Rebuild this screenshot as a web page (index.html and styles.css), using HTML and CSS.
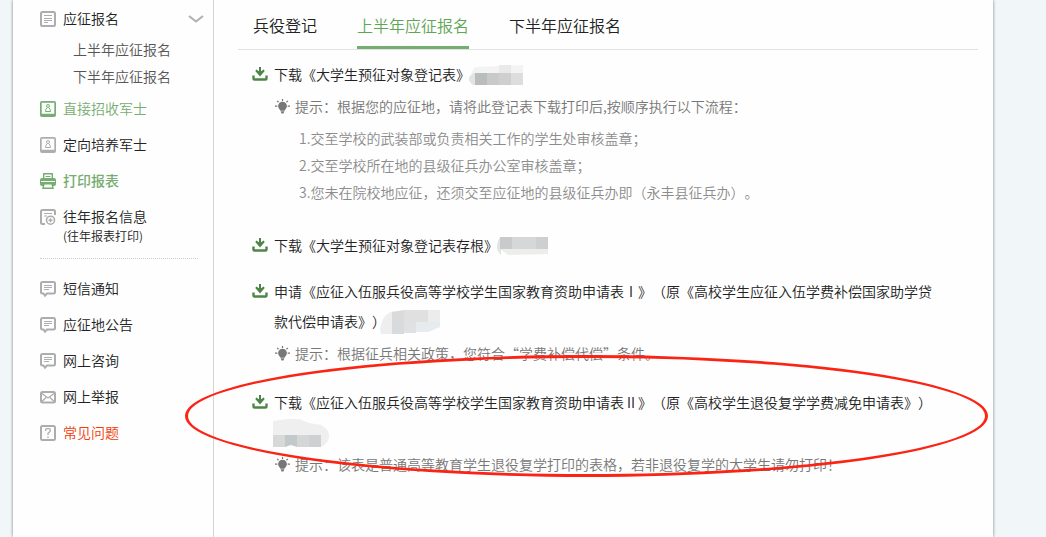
FILE: index.html
```html
<!DOCTYPE html>
<html lang="zh-CN">
<head>
<meta charset="utf-8">
<title>应征报名</title>
<link rel="stylesheet" href="styles.css">
</head>
<body>
<svg class="sprite" aria-hidden="true">
  <symbol id="doc" viewBox="0 0 16 16"><rect x="1" y="1" width="14" height="14" rx="1.5" fill="none" stroke="currentColor" stroke-width="2"/><path d="M4 4.500h8M4 7.500h8M4 9.500h8M4 11.500h4" stroke="currentColor" fill="none"/></symbol>
  <symbol id="badge" viewBox="0 0 16 16"><path d="M2 0h12q2 0 2 2v12q0 2-2 2H2q-2 0-2-2V2Q0 0 2 0zM1.700 1.700v11h12.600v-11z" fill="currentColor" fill-rule="evenodd"/><circle cx="8" cy="5" r="1.500" fill="none" stroke="currentColor"/><path d="M7.300 6.500Q5.500 8 5.500 10.500h5Q10.500 8 8.700 6.500" fill="none" stroke="currentColor"/></symbol>
  <symbol id="printer" viewBox="0 0 16 16"><path d="M3.700 5V.7h8.600V5" fill="none" stroke="currentColor" stroke-width="1.400"/><path d="M5.500 3.500h5" stroke="currentColor"/><path d="M2 5h12q2 0 2 2v4q0 2-2 2H2q-2 0-2-2V7q0-2 2-2z" fill="currentColor"/><path d="M1 8.500h14" stroke="#fefefe"/><path d="M4 10.700h8l1 4.600H3z" fill="#fefefe" stroke="currentColor" stroke-width="1.400"/></symbol>
  <symbol id="history" viewBox="0 0 16 16"><path d="M5 15H2.500Q1 15 1 13.500v-11Q1 1 2.500 1h11Q15 1 15 2.500V6" fill="none" stroke="currentColor" stroke-width="2"/><path d="M4 4.500h8M4 7h3" stroke="currentColor"/><circle cx="10.500" cy="11.200" r="4" fill="none" stroke="currentColor" stroke-width="1.600"/><path d="M10.500 9.200v4M8.500 11.200h4" stroke="currentColor" stroke-width="1.500"/></symbol>
  <symbol id="chat" viewBox="0 0 16 16"><path d="M2.500 1h11Q15 1 15 2.500v8.500q0 1.500-1.500 1.500H7l-2 2.200-1.500-2.200h-1Q1 12.500 1 11V2.500Q1 1 2.500 1z" fill="none" stroke="currentColor" stroke-width="2"/><path d="M4 4.500h8M4 6.500h8M4 8.500h5" stroke="currentColor"/></symbol>
  <symbol id="mail" viewBox="0 0 16 16"><rect x="1" y="3" width="14" height="10.500" rx="1.500" fill="none" stroke="currentColor" stroke-width="2"/><path d="M2 4.500l6 4.500 6-4.500M2 12.500l4-4M14 12.500l-4-4" fill="none" stroke="currentColor" stroke-width="1.300"/></symbol>
  <symbol id="question" viewBox="0 0 16 16"><rect x="1" y="1" width="14" height="14" rx="1.500" fill="none" stroke="currentColor" stroke-width="2"/><path d="M5.700 6V4.500q0-.9 1-.9h2.500q1 0 1 .9v1.800L8 8.200V10M8 11.500V13" fill="none" stroke="currentColor" stroke-width="1.300"/></symbol>
  <symbol id="download" viewBox="0 0 16 16"><path d="M1.500 9.500v3q0 1 1 1h11q1 0 1-1v-3" fill="none" stroke="currentColor" stroke-width="2.400"/><path d="M7 1h2v4.200l2.700-1.700 1 1.500L8 10.500 3.300 5l1-1.500L7 5.200z" fill="currentColor"/></symbol>
  <symbol id="bulb" viewBox="0 0 16 16"><path d="M8 3a4.700 4.700 0 0 1 4.700 4.700c0 2.200-2 3-2.500 4.800H5.800C5.300 10.700 3.300 9.900 3.300 7.700A4.700 4.700 0 0 1 8 3zM6 13h4l-1 2.500H7z" fill="currentColor"/><path d="M8 0v2M2.300 2l1.500 1.500M13.700 2l-1.500 1.500M0 7.500h2.500M13.500 7.500H16" stroke="currentColor" stroke-width="1.300"/></symbol>
</svg>
<div class="card">
  <nav class="sidebar">
    <a class="item" href="#"><svg class="icon"><use href="#doc"/></svg><span class="label">应征报名</span><svg class="chevron" viewBox="0 0 16 8"><path d="M1 1l7 5.500L15 1" fill="none" stroke="#b0b0b0" stroke-width="2"/></svg></a>
    <a class="sub" href="#">上半年应征报名</a>
    <a class="sub" href="#">下半年应征报名</a>
    <a class="item green" href="#"><svg class="icon"><use href="#badge"/></svg><span>直接招收军士</span></a>
    <a class="item" href="#"><svg class="icon"><use href="#badge"/></svg><span>定向培养军士</span></a>
    <a class="item green current" href="#"><svg class="icon"><use href="#printer"/></svg><span>打印报表</span></a>
    <a class="item" href="#"><svg class="icon"><use href="#history"/></svg><span>往年报名信息<small class="note">(往年报表打印)</small></span></a>
    <hr class="divider">
    <a class="item" href="#"><svg class="icon"><use href="#chat"/></svg><span>短信通知</span></a>
    <a class="item" href="#"><svg class="icon"><use href="#chat"/></svg><span>应征地公告</span></a>
    <a class="item" href="#"><svg class="icon"><use href="#chat"/></svg><span>网上咨询</span></a>
    <a class="item" href="#"><svg class="icon"><use href="#mail"/></svg><span>网上举报</span></a>
    <a class="item hot" href="#"><svg class="icon"><use href="#question"/></svg><span>常见问题</span></a>
  </nav>
  <main class="main">
    <div class="tabs">
      <a class="tab" href="#">兵役登记</a>
      <a class="tab active" href="#">上半年应征报名</a>
      <a class="tab" href="#">下半年应征报名</a>
    </div>
    <div class="list">
      <section class="entry">
        <svg class="get"><use href="#download"/></svg>
        <div class="body">
          <div class="title"><a href="#">下载《大学生预征对象登记表》</a><svg class="smudge" width="54" height="20"><path d="M6 2L54 0v8H2z" fill="#f3f3f3"/><path d="M30 0h12v8H30z" fill="#e9e9e9"/><path d="M6 8v12H4q-4-3-4-6t4-6z" fill="#e2e4e4"/><path d="M6 8h12v12H6z" fill="#b9bdbd"/><path d="M18 8h12v12H18z" fill="#c9c9ca"/><path d="M30 8h12v12H30z" fill="#cfcfd0"/><path d="M42 8h12v12H42z" fill="#dddddf"/></svg></div>
          <p class="hint"><svg class="bulb"><use href="#bulb"/></svg>提示：根据您的应征地，请将此登记表下载打印后,按顺序执行以下流程：</p>
          <div class="steps">
            <p>1.交至学校的武装部或负责相关工作的学生处审核盖章；</p>
            <p>2.交至学校所在地的县级征兵办公室审核盖章；</p>
            <p>3.您未在院校地应征，还须交至应征地的县级征兵办即（永丰县征兵办）。</p>
          </div>
        </div>
      </section>
      <section class="entry">
        <svg class="get"><use href="#download"/></svg>
        <div class="body">
          <div class="title"><a href="#">下载《大学生预征对象登记表存根》</a><svg class="smudge" width="51" height="18"><path d="M4 0v18q-5-4-4-10t4-8z" fill="#e4e4e4"/><path d="M3 0h12v12H3z" fill="#c9cacb"/><path d="M15 0h24v12H15z" fill="#d6d7d8"/><path d="M39 0h12v12H39z" fill="#cecfd1"/><path d="M3 12h48v5l-40 1z" fill="#ededec"/></svg></div>
        </div>
      </section>
      <section class="entry">
        <svg class="get"><use href="#download"/></svg>
        <div class="body">
          <div class="title"><a href="#">申请《应征入伍服兵役高等学校学生国家教育资助申请表Ⅰ》（原《高校学生应征入伍学费补偿国家助学贷款代偿申请表》）</a><svg class="smudge overlap" width="60" height="24"><path d="M0 20Q2 2 16 1L12 24H1z" fill="#eee"/><path d="M12 2l12-2v24H12z" fill="#d9dadc"/><path d="M24 0h24v12H24z" fill="#e0e0e1"/><path d="M48 0h12v12H48z" fill="#ebeced"/><path d="M24 12h12v11H24z" fill="#dfe1e2"/><path d="M36 12h24v5l-12 5H36z" fill="#e6ebed"/></svg></div>
          <p class="hint"><svg class="bulb"><use href="#bulb"/></svg>提示：根据征兵相关政策，您符合“学费补偿代偿”条件。</p>
        </div>
      </section>
      <section class="entry">
        <svg class="get"><use href="#download"/></svg>
        <div class="body">
          <div class="title"><a href="#">下载《应征入伍服兵役高等学校学生国家教育资助申请表Ⅱ》（原《高校学生退役复学学费减免申请表》）</a><svg class="smudge" width="56" height="28"><path d="M0 2l14-2h12l10 4 12 2q8 4 8 11t-8 11H36V16H0z" fill="#efefef"/><path d="M0 16h12v12H0z" fill="#d8d8d8"/><path d="M12 16h12v12l-6-2-6 2z" fill="#c3c8cb"/><path d="M24 16h12v12H24z" fill="#d6d6d7"/><path d="M36 16h12v12H36z" fill="#cfd0d2"/></svg></div>
          <p class="hint"><svg class="bulb"><use href="#bulb"/></svg>提示：该表是普通高等教育学生退役复学打印的表格，若非退役复学的大学生请勿打印！</p>
        </div>
      </section>
    </div>
  </main>
  <div class="ring"></div>
</div>
</body>
</html>
```

FILE: styles.css
```css
* { box-sizing: border-box; }
body {
  margin: 0;
  background: #f1f7f8;
  font-family: "Noto Sans CJK SC", sans-serif;
  font-size: 14px;
  font-weight: 350;
  color: #222;
  text-spacing-trim: space-all;
}
a { color: inherit; text-decoration: none; }
p { margin: 0; }
.sprite { position: absolute; width: 0; height: 0; }
.card {
  position: relative;
  display: flex;
  min-height: 100vh;
  margin: 0 53px 0 13px;
  background: #fefefe;
  box-shadow: 0 0 3px rgba(0, 0, 0, 0.5);
}

/* Sidebar */
.sidebar {
  flex: 0 0 201px;
  padding: 0 10px 0 27px;
  border-right: 1px solid #d4d4d4;
}
.item {
  display: flex;
  align-items: flex-start;
  gap: 7px;
  padding: 8px 0;
  line-height: 20px;
}
.icon { flex: none; width: 16px; height: 16px; margin-top: 3px; color: #adadad; }
.label { flex: 1; }
.chevron { width: 16px; height: 8px; margin: 7px -1px 0 0; }
.note { display: block; font-size: 12px; }
.sub { display: block; padding-left: 33px; line-height: 27px; color: #555; }
.green, .green .icon { color: #76ad70; }
.current { font-weight: 500; }
.hot { color: #f23c0c; }
.divider { margin: 4px 5px 11px 0; border: 0; border-top: 1px dotted #ccc; }

/* Content */
.main { flex: 1; min-width: 0; padding: 0 15px 24px 24px; }
.tabs {
  display: flex;
  gap: 40px;
  padding: 5px 15px 0;
  border-bottom: 1px solid #e2e2e2;
}
.tab { padding-bottom: 3px; font-size: 16px; line-height: 41px; }
.active { padding-bottom: 0; border-bottom: 3px solid #76ad70; color: #5fa556; }
.list { padding: 9px 36px 0 14px; }
.entry { display: flex; gap: 6px; margin-bottom: 18px; }
.entry:first-child { margin-bottom: 24px; }
.entry:nth-child(2) { margin-bottom: 16px; }
.entry:nth-child(3) { margin-bottom: 19px; }
.get { flex: none; width: 16px; height: 16px; margin-top: 7px; color: #4d8548; }
.body { flex: 1; min-width: 0; }
.title { line-height: 30px; }
.smudge { vertical-align: middle; margin: -5px 0 -3px -1px; }
.overlap { margin-left: -6px; }
.hint {
  display: flex;
  align-items: center;
  gap: 5px;
  margin-top: 2px;
  padding-left: 1px;
  line-height: 30px;
  color: #777;
}
.bulb { flex: none; width: 15px; height: 15px; }
.steps { padding: 4px 0 0 25px; line-height: 27px; color: #8c8c8c; }

/* Hand-drawn highlight over the last entry */
.ring {
  position: absolute;
  top: 355px;
  left: 172px;
  right: 5px;
  height: 122px;
  border: 3px solid #fb2313;
  border-radius: 50%;
  pointer-events: none;
}
```
